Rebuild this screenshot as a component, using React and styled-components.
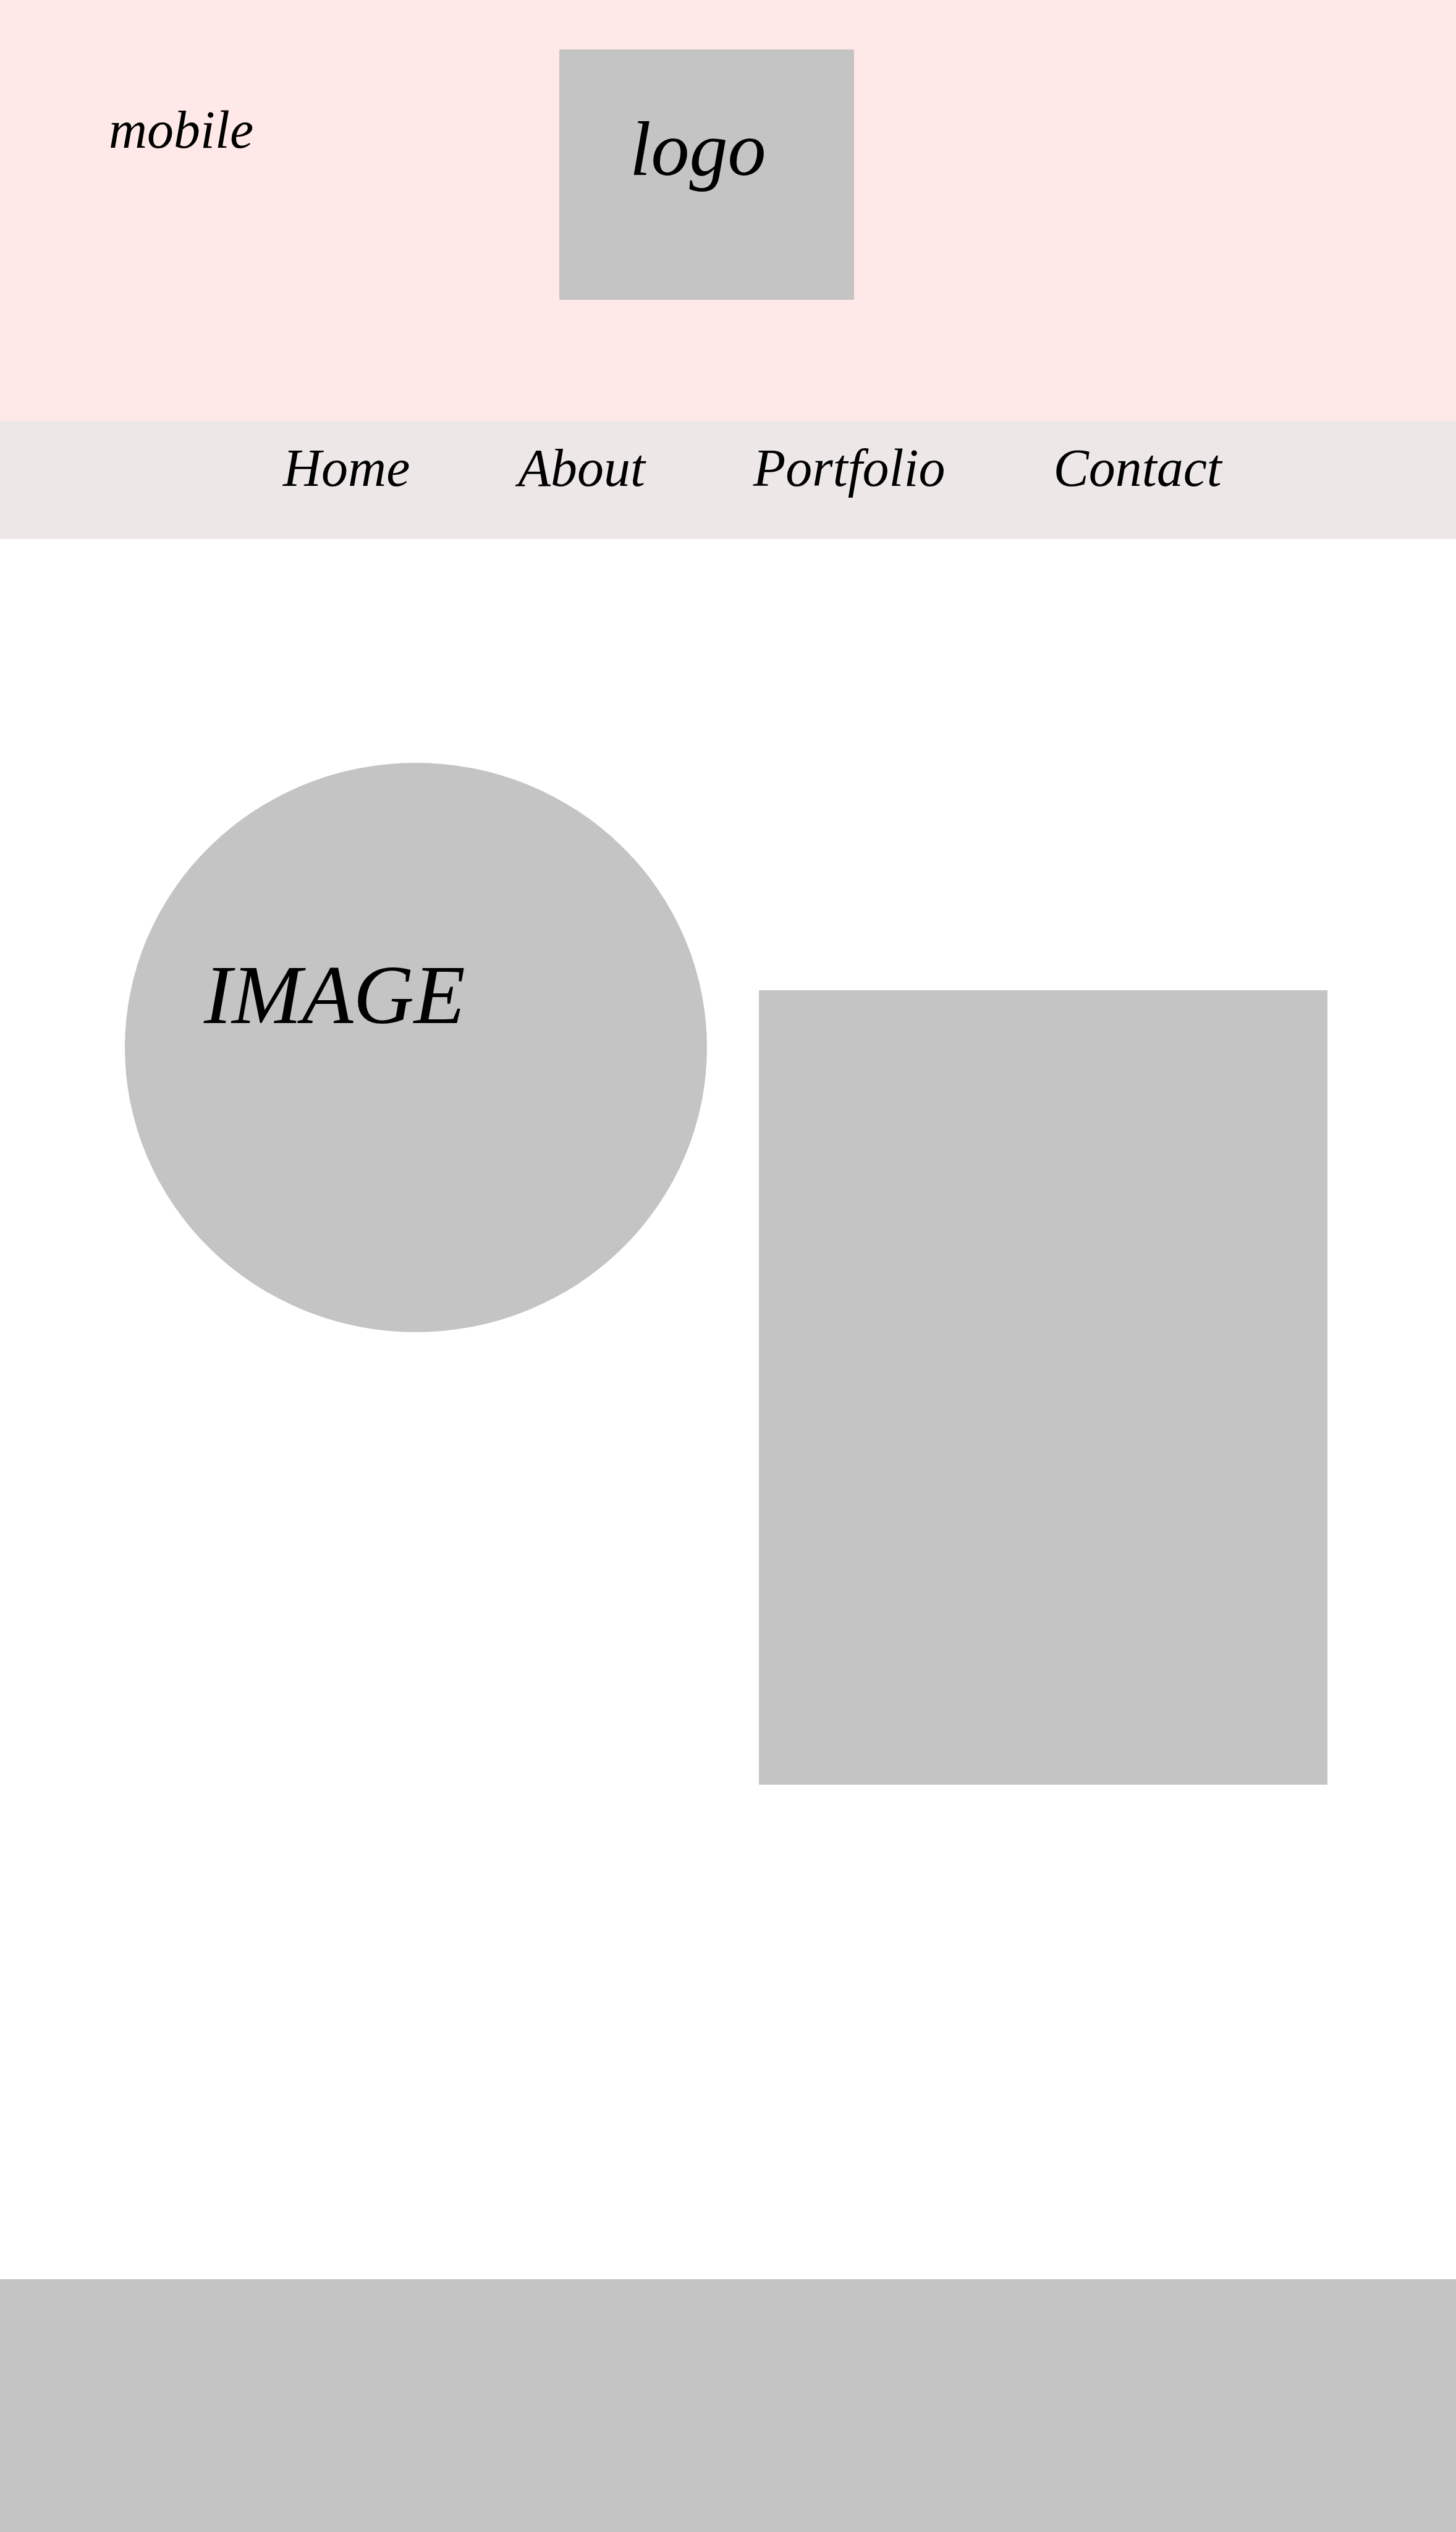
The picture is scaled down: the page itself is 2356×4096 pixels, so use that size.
import React from "react";
import styled, { createGlobalStyle } from "styled-components";

const GlobalStyle = createGlobalStyle`
  *, *::before, *::after { box-sizing: border-box; }
  body {
    margin: 0;
    background: #ffffff;
    color: #000000;
    font-family: Satisfy, "Liberation Serif", serif;
    font-style: italic;
  }
`;

const Page = styled.div`
  display: flex;
  flex-direction: column;
  min-height: 100vh;
`;

const Header = styled.header`
  display: grid;
  grid-template-columns: 905fr 477fr 974fr;
  align-items: start;
  min-height: 681px;
  padding-top: 80px;
  background: #ffe9e8;
`;

const Device = styled.p`
  margin: 0;
  padding: 82px 0 0 176px;
  font-size: 86px;
  line-height: 96px;
`;

const Logo = styled.h1`
  margin: 0;
  padding: 94px 0 0 114px;
  aspect-ratio: 477 / 405;
  background: #c4c4c4;
  font-size: 124px;
  font-weight: 400;
  line-height: 136px;
`;

const Nav = styled.nav`
  display: flex;
  gap: 175px;
  padding: 28px 0 67px 458px;
  background: #ede7e7;
`;

const NavLink = styled.a`
  color: inherit;
  font-size: 86px;
  line-height: 96px;
  text-decoration: none;
`;

const Main = styled.main`
  display: grid;
  flex: 1;
  grid-template-columns: 942fr 920fr;
  column-gap: 84px;
  align-items: start;
  padding: 362px 208px 800px 202px;
`;

const Portrait = styled.section`
  padding: 301px 0 0 128px;
  aspect-ratio: 942 / 921;
  border-radius: 50%;
  background: #c4c4c4;
`;

const PortraitLabel = styled.h2`
  margin: 0;
  font-size: 136px;
  font-weight: 400;
  line-height: 148px;
`;

const Panel = styled.section`
  margin-top: 368px;
  aspect-ratio: 920 / 1285;
  background: #c4c4c4;
`;

const Footer = styled.footer`
  height: 409px;
  background: #c4c4c4;
`;

const links = ["Home", "About", "Portfolio", "Contact"];

export default function App() {
  return (
    <Page>
      <GlobalStyle />
      <Header>
        <Device>mobile</Device>
        <Logo>logo</Logo>
      </Header>
      <Nav>
        {links.map((label) => (
          <NavLink key={label} href={`#${label.toLowerCase()}`}>
            {label}
          </NavLink>
        ))}
      </Nav>
      <Main>
        <Portrait>
          <PortraitLabel>IMAGE</PortraitLabel>
        </Portrait>
        <Panel />
      </Main>
      <Footer />
    </Page>
  );
}
